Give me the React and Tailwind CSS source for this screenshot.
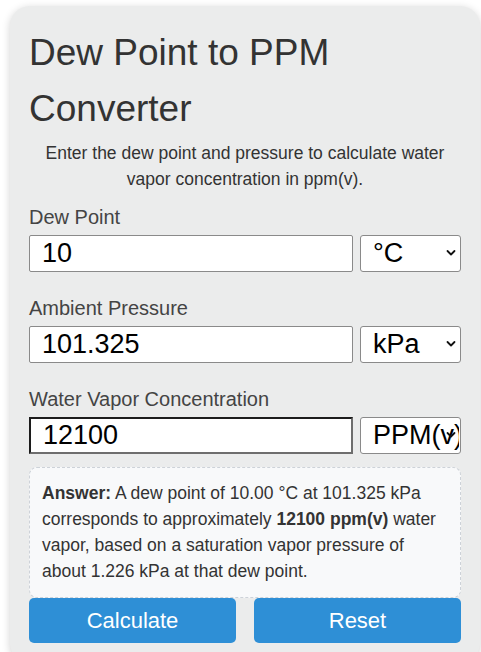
import React from 'react';

const font = { fontFamily: '"Liberation Sans", Arial, Helvetica, sans-serif' };

const Chevron = () => (
  <svg
    className="pointer-events-none absolute right-[5px] top-1/2 -translate-y-1/2"
    width="10"
    height="7"
    viewBox="0 0 10 7"
    fill="none"
  >
    <path d="M1.5 1.5 L5 5 L8.5 1.5" stroke="#111" strokeWidth="1.8" strokeLinecap="round" strokeLinejoin="round" />
  </svg>
);

const Field = ({ label, value, unit, options, last, readOnly }) => (
  <div className={last ? 'mb-[13px]' : 'mb-[21px]'}>
    <label className="block text-[20px] leading-[30px] text-[#444] mb-[3px]">{label}</label>
    <div className="flex gap-[7px]">
      <input
        type="text"
        defaultValue={value}
        readOnly={readOnly}
        className={
          'flex-1 min-w-0 h-[37px] px-[12px] text-[27px] text-black bg-white outline-none ' +
          (readOnly
            ? 'border-2 border-t-[#1c1c1c] border-l-[#1c1c1c] border-b-[#6e6e6e] border-r-[#6e6e6e]'
            : 'border border-[#8a8a8a] rounded-[2px]')
        }
        style={font}
      />
      <div className="relative w-[101px] h-[37px]">
        <select
          defaultValue={unit}
          className="w-full h-full appearance-none bg-white border border-[#8a8a8a] rounded-[3px] pl-[12px] pr-[1px] pb-[1px] text-[27px] leading-[30px] text-black outline-none"
          style={font}
        >
          {options.map((o) => (
            <option key={o}>{o}</option>
          ))}
        </select>
        <Chevron />
      </div>
    </div>
  </div>
);

const App = () => {
  return (
    <div className="min-h-screen bg-white pt-[6px] pl-[10px]" style={font}>
      <div className="w-[470px] bg-[#ebecec] rounded-[20px] shadow-[0_2px_8px_rgba(0,0,0,0.18)] px-[19px] pt-[19px] pb-[20px]">
        <h1 className="text-[37px] leading-[1.5] text-[#333] font-normal">Dew Point to PPM Converter</h1>
        <p className="mt-[4px] text-center text-[17.5px] leading-[26.25px] text-[#333]">
          Enter the dew point and pressure to calculate water vapor concentration in ppm(v).
        </p>

        <div className="mt-[9px]">
          <Field label="Dew Point" value="10" unit="°C" options={['°C', '°F', 'K']} />
          <Field label="Ambient Pressure" value="101.325" unit="kPa" options={['kPa', 'atm', 'bar', 'psi']} />
          <Field
            label="Water Vapor Concentration"
            value="12100"
            unit="PPM(v)"
            options={['PPM(v)', '%']}
            last
            readOnly
          />
        </div>

        <div className="bg-[#f8f9fa] border border-dashed border-[#cdd2d8] rounded-[8px] p-[12px] text-[17.5px] leading-[26.25px] text-[#333]">
          <strong className="font-bold">Answer:</strong> A dew point of 10.00 °C at 101.325 kPa corresponds to
          approximately <strong className="font-bold">12100 ppm(v)</strong> water vapor, based on a saturation vapor
          pressure of about 1.226 kPa at that dew point.
        </div>

        <div className="grid grid-cols-2 gap-[18px]">
          <button className="h-[45px] rounded-[5px] bg-[#2e8fd6] text-white text-[22px]" style={font}>
            Calculate
          </button>
          <button className="h-[45px] rounded-[5px] bg-[#2e8fd6] text-white text-[22px]" style={font}>
            Reset
          </button>
        </div>
      </div>
    </div>
  );
};

export default App;
